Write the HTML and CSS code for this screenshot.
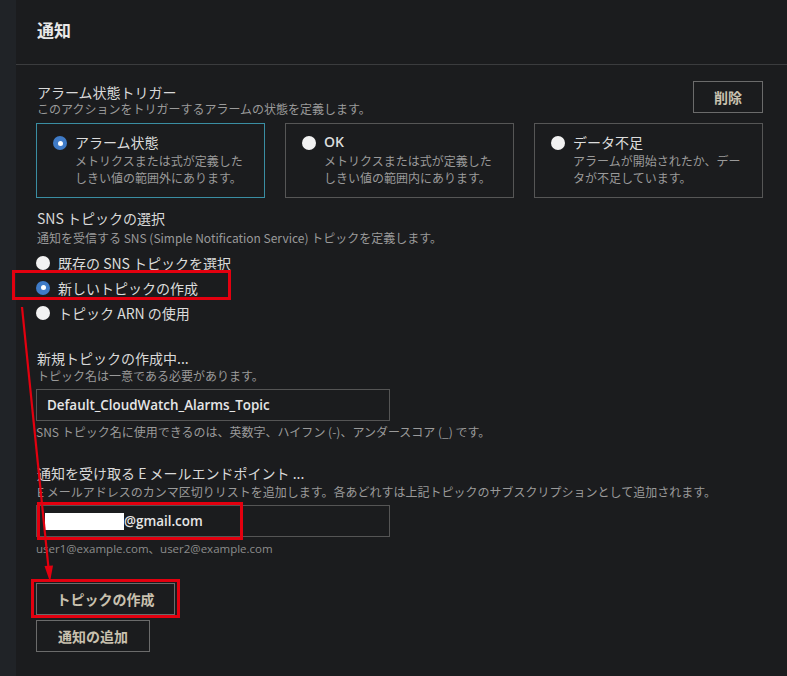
FILE: index.html
```html
<!DOCTYPE html>
<html lang="ja">
<head>
<meta charset="utf-8">
<link rel="stylesheet" href="styles.css">
</head>
<body>
<div class="page">
  <div class="rail"></div>
  <div class="panel">
    <div class="panel-head"><h2 class="title">通知</h2></div>
    <div class="content">
      <div class="trigger-row">
        <div>
          <div class="label">アラーム状態トリガー</div>
          <div class="sub">このアクションをトリガーするアラームの状態を定義します。</div>
        </div>
        <button class="btn">削除</button>
      </div>
      <div class="tiles">
        <div class="tile selected">
          <span class="radio on"></span>
          <div>
            <div class="tile-label">アラーム状態</div>
            <div class="tile-desc">メトリクスまたは式が定義した<br>しきい値の範囲外にあります。</div>
          </div>
        </div>
        <div class="tile">
          <span class="radio"></span>
          <div>
            <div class="tile-label latin">OK</div>
            <div class="tile-desc">メトリクスまたは式が定義した<br>しきい値の範囲内にあります。</div>
          </div>
        </div>
        <div class="tile">
          <span class="radio"></span>
          <div>
            <div class="tile-label">データ不足</div>
            <div class="tile-desc">アラームが開始されたか、デー<br>タが不足しています。</div>
          </div>
        </div>
      </div>

      <div class="section s-sns">
        <div class="label">SNS トピックの選択</div>
        <div class="sub">通知を受信する SNS (Simple Notification Service) トピックを定義します。</div>
        <div class="opts">
          <div class="opt"><span class="radio"></span><span>既存の SNS トピックを選択</span></div>
          <div class="opt"><span class="radio on"></span><span>新しいトピックの作成</span></div>
          <div class="opt"><span class="radio"></span><span>トピック ARN の使用</span></div>
        </div>
      </div>

      <div class="section s-new">
        <div class="label">新規トピックの作成中...</div>
        <div class="sub">トピック名は一意である必要があります。</div>
        <div class="input">Default_CloudWatch_Alarms_Topic</div>
        <div class="hint">SNS トピック名に使用できるのは、英数字、ハイフン (-)、アンダースコア (_) です。</div>
      </div>

      <div class="section s-mail">
        <div class="label">通知を受け取る E メールエンドポイント ...</div>
        <div class="sub">E メールアドレスのカンマ区切りリストを追加します。各あどれすは上記トピックのサブスクリプションとして追加されます。</div>
        <div class="input"><span class="redact"></span>@gmail.com</div>
        <div class="hint small">user1@example.com、user2@example.com</div>
      </div>

      <div class="actions">
        <button class="btn wide">トピックの作成</button>
        <button class="btn">通知の追加</button>
      </div>
    </div>
  </div>

  <div class="mark mark-radio"></div>
  <div class="mark mark-mail"></div>
  <div class="mark mark-btn"></div>
  <svg class="arrow" width="787" height="676" viewBox="0 0 787 676">
    <line x1="22" y1="307" x2="48.5" y2="568" stroke="#e3000f" stroke-width="2.2"/>
    <polygon points="50,582 44.5,566 53,565.5" fill="#e3000f"/>
  </svg>
</div>
</body>
</html>
```

FILE: styles.css
```css
* { box-sizing: border-box; }
html, body { margin: 0; padding: 0; }
body {
  background: #1b1c1e;
  font-family: "Noto Sans CJK JP", "Open Sans", sans-serif;
  color: #d6d6d6;
}
.page {
  position: relative;
  display: flex;
  width: 787px;
  height: 676px;
  overflow: hidden;
}
.rail {
  width: 16px;
  background: #202327;
  flex: none;
}
.panel {
  flex: 1;
  background: #1b1c1e;
  height: 668px;
}
.panel-head {
  height: 65px;
  border-bottom: 1px solid #3b3c3e;
  padding: 19px 21px 0;
}
.title {
  margin: 0;
  font-size: 17px;
  font-weight: 700;
  line-height: 22px;
  color: #e8e8e8;
}
.content {
  padding: 16px 24px 0 20px;
}
.label {
  font-size: 14px;
  line-height: 18px;
  color: #d9d9d9;
  padding-left: 1px;
}
.sub {
  font-size: 12px;
  line-height: 16px;
  color: #9a9a9a;
  padding-left: 1px;
}
.trigger-row {
  display: flex;
  justify-content: space-between;
  align-items: flex-start;
}
.trigger-row > div { padding-top: 2px; }
.btn {
  font-family: "Noto Sans CJK JP", sans-serif;
  font-size: 14px;
  font-weight: 700;
  color: #c9c1af;
  background: transparent;
  border: 1px solid #6b6b6b;
  height: 32px;
  width: 70px;
  padding: 0;
  line-height: 30px;
}
.tiles {
  display: grid;
  grid-template-columns: repeat(3, 1fr);
  gap: 20px;
  margin-top: 6px;
}
.tile {
  height: 75px;
  border: 1px solid #565656;
  display: flex;
  gap: 8px;
  padding: 8px 10px 0 16px;
}
.tile.selected { border-color: #3a8ea3; }
.tile .radio { margin-top: 4px; }
.tile-label {
  font-size: 14px;
  line-height: 20px;
  color: #dcdcdc;
}
.tile-label.latin { font-family: "Open Sans", sans-serif; font-weight: 600; }
.tile-desc {
  font-size: 12px;
  line-height: 17px;
  color: #9a9a9a;
}
.radio {
  flex: none;
  display: inline-block;
  width: 14px;
  height: 14px;
  border-radius: 50%;
  background: #f2f2f2;
}
.radio.on {
  background: #3f7bc7;
  position: relative;
}
.radio.on::after {
  content: "";
  position: absolute;
  left: 4.5px;
  top: 4.5px;
  width: 5px;
  height: 5px;
  border-radius: 50%;
  background: #fff;
}
.section { margin-top: 11px; }
.section .sub { margin-top: 3px; }
.s-new { margin-top: 24px; }
.s-mail { margin-top: 24px; }
.s-new .sub { margin-top: 1px; }
.s-mail .sub { margin-top: 2px; }
.opts { margin-top: 4px; }
.opt {
  display: flex;
  align-items: center;
  gap: 8px;
  height: 25px;
  font-size: 14px;
  color: #dcdcdc;
}
.input {
  margin-top: 5px;
  width: 354px;
  height: 32px;
  border: 1px solid #555;
  padding: 0 10px;
  display: flex;
  align-items: center;
  font-family: "Open Sans", "Noto Sans CJK JP", sans-serif;
  font-weight: 600;
  font-size: 13.4px;
  color: #e6e6e6;
}
.redact {
  display: inline-block;
  width: 79px;
  height: 17px;
  background: #ffffff;
  margin-left: -2px;
}
.hint {
  margin-top: 3px;
  font-size: 12px;
  line-height: 16px;
  color: #9a9a9a;
}
.hint.small {
  margin-top: 4px;
  font-family: "Open Sans", "Noto Sans CJK JP", sans-serif;
  font-size: 11.5px;
  color: #8c8c8c;
}
.actions {
  margin-top: 26px;
  display: flex;
  flex-direction: column;
  align-items: flex-start;
  gap: 5px;
}
.btn.wide { width: 139px; }
.actions .btn:last-child { width: 114px; }
.mark {
  position: absolute;
  border: 3px solid #e3000f;
}
.mark-radio { left: 12px; top: 270px; width: 219px; height: 30px; }
.mark-mail { left: 37px; top: 502px; width: 206px; height: 38px; }
.mark-btn { left: 31px; top: 579px; width: 149px; height: 39px; }
.arrow { position: absolute; left: 0; top: 0; pointer-events: none; }
```
